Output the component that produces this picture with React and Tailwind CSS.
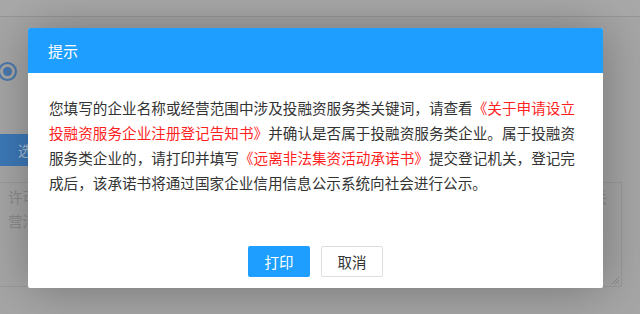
const lines = [
  [
    ['您填写的企业名称或经营范围中涉及投融资服务类关键词，请查看', false],
    ['《关于申请设立', true],
  ],
  [
    ['投融资服务企业注册登记告知书》', true],
    ['并确认是否属于投融资服务类企业。属于投融资', false],
  ],
  [
    ['服务类企业的，请打印并填写', false],
    ['《远离非法集资活动承诺书》', true],
    ['提交登记机关，登记完', false],
  ],
  [['成后，该承诺书将通过国家企业信用信息公示系统向社会进行公示。', false]],
];

const font = { fontFamily: '"Noto Sans CJK SC", "Noto Sans", sans-serif' };

const Notice = () => (
  <div className="absolute left-[28px] top-[28px] flex h-[260px] w-[575px] flex-col rounded-[2px] bg-white shadow-[1px_1px_50px_rgba(0,0,0,0.3)]">
    <div className="flex h-[45px] items-center rounded-t-[2px] bg-[#1e9fff] pl-[20px] pt-px text-[15px] text-white">
      提示
    </div>
    <div className="flex-1 pl-[21px] pr-[28px] pt-[22px] text-[14.6px] leading-[25px] text-[#333]">
      {lines.map((parts, i) => (
        <div
          key={i}
          className={i < lines.length - 1 ? 'whitespace-nowrap text-justify [text-align-last:justify]' : 'whitespace-nowrap'}
        >
          {parts.map(([t, red], j) =>
            red ? (
              <span key={j} className="text-[#ff1f1f]">{t}</span>
            ) : (
              <span key={j}>{t}</span>
            )
          )}
        </div>
      ))}
    </div>
    <div className="flex justify-center gap-[11px] pb-[11px]">
      <button className="h-[31px] w-[62px] rounded-[2px] bg-[#1e9fff] text-[14.5px] text-white">打印</button>
      <button className="h-[31px] w-[62px] rounded-[2px] border border-[#dedede] bg-white text-[14.5px] text-[#333]">取消</button>
    </div>
  </div>
);

export default function App() {
  return (
    <div className="relative h-[314px] w-[640px] overflow-hidden bg-[#a6a6a6]" style={font}>
      <div className="h-[17px] border-b border-[#979797] bg-[#a9a9a9]" />

      <div className="ml-[-2px] mt-[45px] flex h-[19px] w-[19px] items-center justify-center rounded-full border-2 border-[#4978ad]">
        <div className="h-[9px] w-[9px] rounded-full bg-[#4978ad]" />
      </div>

      <div className="mt-[53px] flex h-[32px] w-[80px] items-center bg-[#3d79b9] pl-[18px] text-[14px] text-[#a9bdd6]">
        选
      </div>

      <div className="relative ml-[-1px] mt-[16px] h-[105px] w-[623px] border border-[#9a9a9a] pl-[8px] pt-[2px] text-[14.5px] leading-[24px] text-[#8c8c8c]">
        <div className="flex justify-between pr-[14px]">
          <span>许可</span>
          <span>关</span>
        </div>
        <div>营沿</div>
        <svg className="absolute bottom-[1px] right-[1px]" width="10" height="10" viewBox="0 0 10 10">
          <path d="M9 2 L2 9 M9 5 L5 9 M9 8 L8 9" stroke="#8a8a8a" strokeWidth="1" />
        </svg>
      </div>

      <Notice />
    </div>
  );
}
